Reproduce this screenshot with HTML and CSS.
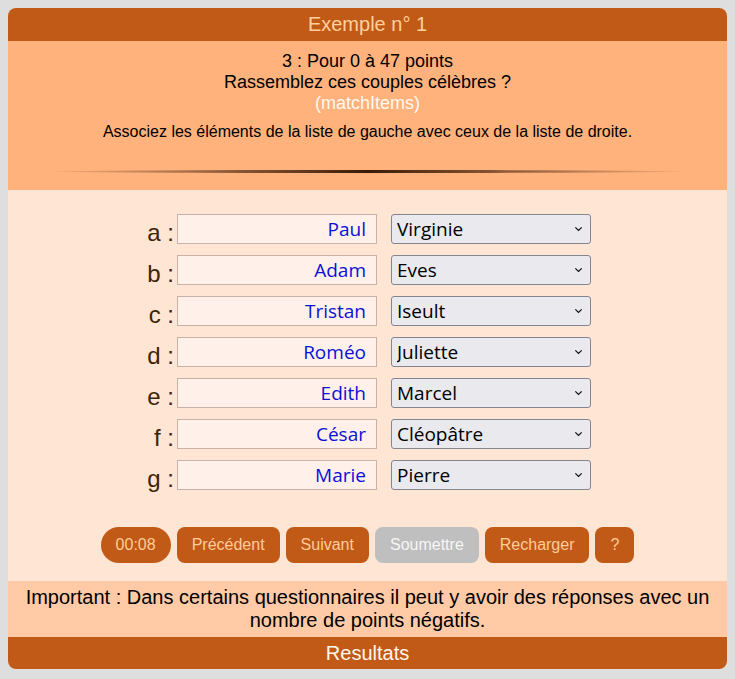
FILE: index.html
```html
<!DOCTYPE html>
<html lang="fr">
<head>
<meta charset="utf-8">
<title>Exemple n° 1</title>
<link rel="stylesheet" href="styles.css">
</head>
<body>
<div class="quiz">
  <div class="title">Exemple n° 1</div>
  <div class="intro">
    <div class="q">3 : Pour 0 à 47 points</div>
    <div class="q">Rassemblez ces couples célèbres ?</div>
    <div class="type">(matchItems)</div>
    <div class="hint">Associez les éléments de la liste de gauche avec ceux de la liste de droite.</div>
    <div class="sep"></div>
  </div>
  <div class="body">
    <div class="rows">
      <div class="row"><span class="lbl">a :</span><input class="left" value="Paul" readonly><div class="sel"><select><option>Virginie</option></select><svg viewBox="0 0 10 6"><path d="M1.5 1.2 L5 4.6 L8.5 1.2"/></svg></div></div>
      <div class="row"><span class="lbl">b :</span><input class="left" value="Adam" readonly><div class="sel"><select><option>Eves</option></select><svg viewBox="0 0 10 6"><path d="M1.5 1.2 L5 4.6 L8.5 1.2"/></svg></div></div>
      <div class="row"><span class="lbl">c :</span><input class="left" value="Tristan" readonly><div class="sel"><select><option>Iseult</option></select><svg viewBox="0 0 10 6"><path d="M1.5 1.2 L5 4.6 L8.5 1.2"/></svg></div></div>
      <div class="row"><span class="lbl">d :</span><input class="left" value="Roméo" readonly><div class="sel"><select><option>Juliette</option></select><svg viewBox="0 0 10 6"><path d="M1.5 1.2 L5 4.6 L8.5 1.2"/></svg></div></div>
      <div class="row"><span class="lbl">e :</span><input class="left" value="Edith" readonly><div class="sel"><select><option>Marcel</option></select><svg viewBox="0 0 10 6"><path d="M1.5 1.2 L5 4.6 L8.5 1.2"/></svg></div></div>
      <div class="row"><span class="lbl">f :</span><input class="left" value="César" readonly><div class="sel"><select><option>Cléopâtre</option></select><svg viewBox="0 0 10 6"><path d="M1.5 1.2 L5 4.6 L8.5 1.2"/></svg></div></div>
      <div class="row"><span class="lbl">g :</span><input class="left" value="Marie" readonly><div class="sel"><select><option>Pierre</option></select><svg viewBox="0 0 10 6"><path d="M1.5 1.2 L5 4.6 L8.5 1.2"/></svg></div></div>
    </div>
    <div class="buttons">
      <span class="btn timer">00:08</span>
      <span class="btn">Précédent</span>
      <span class="btn">Suivant</span>
      <span class="btn disabled">Soumettre</span>
      <span class="btn">Recharger</span>
      <span class="btn">?</span>
    </div>
  </div>
  <div class="important">Important : Dans certains questionnaires il peut y avoir des réponses avec un nombre de points négatifs.</div>
  <div class="results">Resultats</div>
</div>
</body>
</html>
```

FILE: styles.css
```css
html, body {
  margin: 0;
  padding: 0;
}
body {
  background: #dedede;
  padding: 8px;
  font-family: "Liberation Sans", Arial, sans-serif;
}
.quiz {
  width: 719px;
  border-radius: 8px;
  overflow: hidden;
  background: #ffe5d3;
}
.title {
  background: #c15a17;
  color: #ffd09c;
  font-size: 20px;
  height: 33px;
  line-height: 33px;
  text-align: center;
}
.intro {
  background: #ffb27c;
  text-align: center;
  color: #000;
  padding-top: 10px;
  height: 139px;
  display: flex;
  flex-direction: column;
  align-items: center;
}
.q, .type {
  font-size: 18px;
  line-height: 21px;
}
.type {
  color: #fff8f0;
}
.hint {
  font-size: 16px;
  line-height: 18px;
  margin-top: 9px;
}
.sep {
  margin-top: 29px;
  width: 645px;
  height: 3px;
  border-radius: 50%;
  background: linear-gradient(to right, rgba(60,25,5,0) 0%, rgba(60,25,5,0.5) 25%, #3a1a06 50%, rgba(60,25,5,0.5) 75%, rgba(60,25,5,0) 100%);
}
.body {
  padding-top: 24px;
  height: 367px;
}
.rows {
  display: flex;
  flex-direction: column;
  gap: 11px;
}
.row {
  display: flex;
  align-items: center;
  height: 30px;
}
.lbl {
  width: 166px;
  text-align: right;
  font-size: 24px;
  color: #3d2406;
  padding-right: 3px;
  line-height: 30px;
  padding-top: 7px;
}
input.left {
  box-sizing: border-box;
  width: 200px;
  height: 30px;
  margin: 0;
  border: 1px solid #c8b2a8;
  background: #fff1ea;
  color: #0a10d8;
  text-align: right;
  font-family: "Open Sans", "DejaVu Sans", sans-serif;
  font-size: 19px;
  padding: 0 10px 0 4px;
  outline: none;
}
.sel {
  position: relative;
  margin-left: 14px;
  width: 200px;
  height: 30px;
}
.sel select {
  appearance: none;
  -webkit-appearance: none;
  box-sizing: border-box;
  width: 200px;
  height: 30px;
  margin: 0;
  border: 1px solid #858592;
  border-radius: 3px;
  background: #e9e9ee;
  color: #000;
  font-family: "Open Sans", "DejaVu Sans", sans-serif;
  font-size: 19px;
  padding: 0 20px 0 5px;
}
.sel svg {
  position: absolute;
  right: 8px;
  top: 12px;
  width: 9px;
  height: 6px;
  fill: none;
  stroke: #111;
  stroke-width: 1.4;
  pointer-events: none;
}
.buttons {
  display: flex;
  justify-content: center;
  gap: 6px;
  margin-top: 37px;
}
.btn {
  background: #c15a17;
  color: #ffcb98;
  font-size: 16px;
  height: 36px;
  line-height: 36px;
  padding: 0 15px;
  border-radius: 8px;
}
.btn.timer {
  border-radius: 18px;
}
.btn.disabled {
  background: #bfbfbf;
  color: #f6f6f6;
}
.important {
  background: #ffcaa5;
  color: #000;
  font-size: 20px;
  line-height: 23px;
  text-align: center;
  padding: 5px 10px 2px;
  height: 49px;
}
.results {
  background: #c15a17;
  color: #fff6ea;
  font-size: 20px;
  height: 32px;
  line-height: 33px;
  text-align: center;
}
```
